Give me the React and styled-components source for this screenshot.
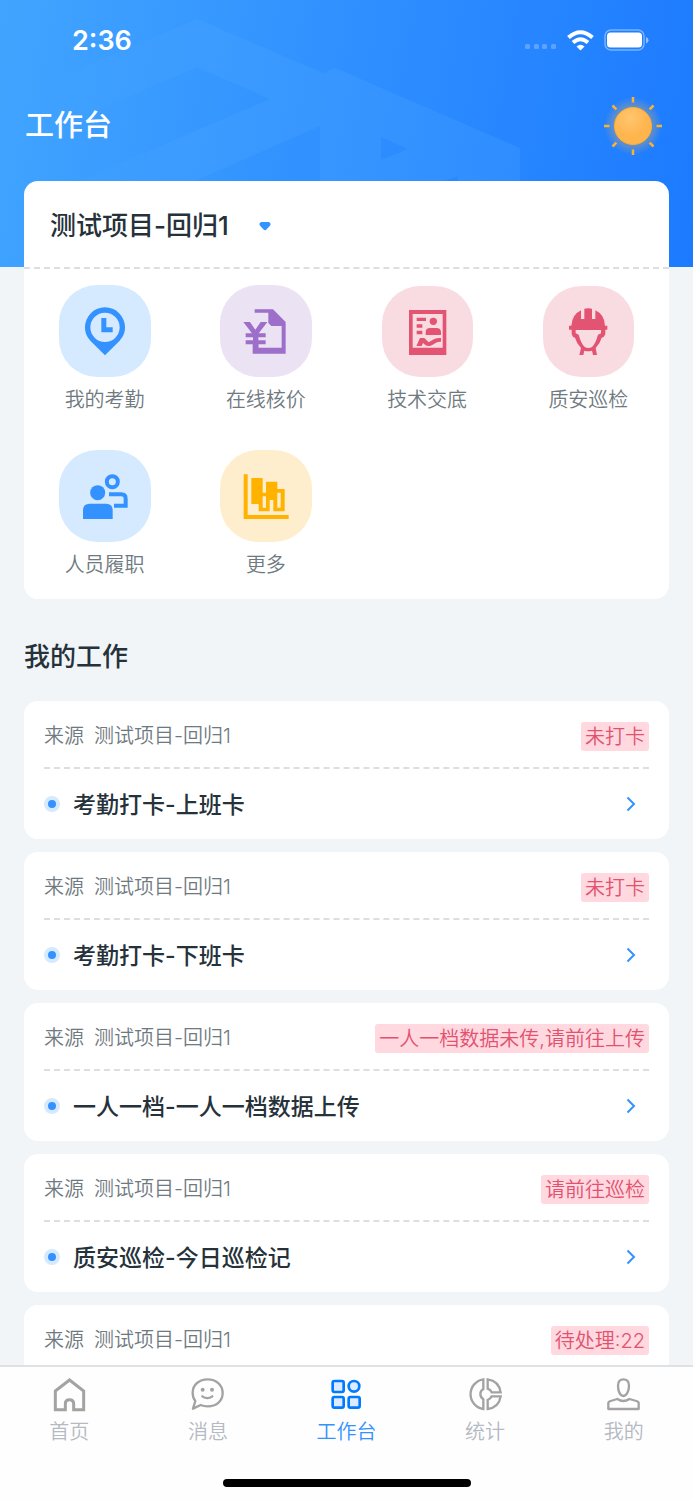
import React from 'react';
import styled, { createGlobalStyle } from 'styled-components';

const GlobalStyle = createGlobalStyle`
  *, *::before, *::after { box-sizing: border-box; }
  body {
    margin: 0;
    background: #f1f5f8;
    color: #26323a;
    font-family: Inter, "Noto Sans CJK SC", sans-serif;
  }
  h1, h2, h3, p, ul { margin: 0; padding: 0; font-weight: 500; }
  ul { list-style: none; }
  button, select { font: inherit; color: inherit; }
  svg { display: block; flex: none; }
`;

const Shell = styled.div`
  height: 100vh;
  display: flex;
  flex-direction: column;
`;

const Scroller = styled.div`
  flex: 1;
  min-height: 0;
  overflow-y: auto;
  scrollbar-width: none;
`;

const Hero = styled.header`
  position: relative;
  height: 267px;
  overflow: hidden;
  color: #fff;
  background: linear-gradient(100deg, #41a5ff 0%, #2f8fff 50%, #1c7aff 100%);
`;

const HeroPattern = styled.svg`
  position: absolute;
  top: 0;
  left: 0;
`;

const StatusBar = styled.div`
  position: relative;
  display: flex;
  align-items: center;
  justify-content: space-between;
  height: 80px;
  padding: 0 44px 0 72px;
  font-size: 27px;
  font-weight: 600;
`;

const StatusIcons = styled.div`
  display: flex;
  align-items: center;
  gap: 10px;
`;

const TitleBar = styled.div`
  position: relative;
  display: flex;
  align-items: center;
  justify-content: space-between;
  height: 92px;
  padding: 0 28px 0 25px;
`;

const PageTitle = styled.h1`
  font-size: 29px;
  line-height: 40px;
`;

const Main = styled.main`
  position: relative;
  margin-top: -86px;
  padding: 0 24px 13px;
`;

const Card = styled.section`
  background: #fff;
  border-radius: 14px;
`;

const ProjectPicker = styled.label`
  display: flex;
  align-items: center;
  height: 88px;
  padding: 4px 26px 0;
  border-bottom: 2px dashed #dcdfe1;
`;

const ProjectSelect = styled.select`
  appearance: none;
  border: 0;
  background: none;
  padding: 0 44px 0 0;
  font-size: 26px;
  font-weight: 500;
  line-height: 40px;
`;

const Caret = styled.svg`
  margin-left: -14px;
  pointer-events: none;
`;

const AppGrid = styled.div`
  display: grid;
  grid-template-columns: repeat(4, 1fr);
  row-gap: 36px;
  padding: 16px 0 20px;
`;

const AppButton = styled.button`
  display: flex;
  flex-direction: column;
  align-items: center;
  justify-content: flex-end;
  gap: 9px;
  height: 129px;
  padding: 0;
  border: 0;
  background: none;
  color: #6f7a80;
  font-size: 20px;
  font-weight: 350;
  line-height: 28px;
`;

const Tile = styled.span`
  display: block;
  overflow: hidden;
  border-radius: 38px;
  color: ${(p) => p.$ink};
  background: ${(p) => p.$tint};
`;

const SectionTitle = styled.h2`
  padding: 38px 0 24px;
  font-size: 26px;
  line-height: 40px;
`;

const TaskList = styled.ul`
  display: flex;
  flex-direction: column;
  gap: 13px;
`;

const TaskCard = styled.li`
  padding: 0 20px;
  background: #fff;
  border-radius: 14px;
`;

const TaskSource = styled.div`
  display: flex;
  align-items: center;
  justify-content: space-between;
  height: 68px;
  border-bottom: 2px dashed #dcdfe1;
  color: #6f7a80;
  font-size: 20px;
  font-weight: 350;
`;

const SourceText = styled.p`
  display: flex;
  gap: 10px;
  font-weight: 350;
`;

const Tag = styled.span`
  padding: 1px 4px 0;
  margin-top: 4px;
  border-radius: 3px;
  background: #ffd8e0;
  color: #e2526f;
  line-height: 28px;
`;

const TaskLink = styled.a`
  display: flex;
  align-items: center;
  height: 70px;
  padding-right: 13px;
  color: inherit;
  text-decoration: none;
`;

const Bullet = styled.span`
  flex: none;
  width: 16px;
  height: 16px;
  margin-right: 13px;
  border: 4px solid #d5e9ff;
  border-radius: 50%;
  background: #3392ff;
`;

const TaskTitle = styled.h3`
  flex: 1;
  padding-top: 2px;
  font-size: 23px;
  line-height: 32px;
`;

const TabBar = styled.footer`
  flex: none;
  padding-bottom: 13px;
  border-top: 2px solid #dfe2e5;
  background: #fefefe;
`;

const Tabs = styled.nav`
  display: grid;
  grid-template-columns: repeat(5, 1fr);
`;

const Tab = styled.a`
  display: flex;
  flex-direction: column;
  align-items: center;
  gap: 6px;
  padding-top: 10px;
  color: ${(p) => (p.$active ? '#3392ff' : '#b4b9c2')};
  font-size: 20px;
  font-weight: 350;
  line-height: 28px;
  text-decoration: none;
`;

const HomeIndicator = styled.div`
  width: 248px;
  height: 8px;
  margin: 33px auto 0;
  border-radius: 4px;
  background: #000;
`;

const apps = [
  {
    name: '我的考勤', tint: '#d5e9ff', ink: '#3392ff', size: 92, box: '57 30 276 276',
    art: (
      <>
        <path fillRule="evenodd" fill="currentColor" d="M195 97a60 60 0 0 1 60 60c0 18-7 30-16 40l-44 44-44-44c-9-10-16-22-16-40a60 60 0 0 1 60-60zm0 16a44 44 0 1 0 0 88 44 44 0 0 0 0-88z" />
        <path fill="currentColor" d="M184 129h15v28h19v15h-34z" />
      </>
    ),
  },
  {
    name: '在线核价', tint: '#ebe2f3', ink: '#9d6fca', size: 92, box: '541 30 276 276',
    art: (
      <>
        <path fill="currentColor" d="M645 103h55l38 38v95h-99v-36h17v18h70v-65h-31l-9-9v-31h-41z" />
        <path fill="none" stroke="currentColor" strokeWidth="12" d="M618 181h60M618 202h60" />
        <path fill="none" stroke="currentColor" strokeWidth="16" d="M648 171v50" />
        <path fill="currentColor" d="M611 141h20l16 23 16-23h20l-28 37h-16z" />
      </>
    ),
  },
  {
    name: '技术交底', tint: '#f9dce2', ink: '#e35472', size: 91, box: '66 36 273 273',
    art: (
      <>
        <path fillRule="evenodd" fill="currentColor" d="M147 108h112v135h-112zM158 120v101h90v-101z" />
        <path fill="currentColor" d="M170 131h28v10h-28zM170 151h17v10h-17zM170 170h17v11h-17z" />
        <circle cx="220" cy="142" r="11" fill="currentColor" />
        <path fill="currentColor" d="M197 183v-8q0-13 13-13h19q14 0 14 13v8zM169 216l11-24h13l13 13 17-10q8-4 20-3v11c-16-1-21 9-31 12q-9 3-17-3l-6-5-4 9z" />
      </>
    ),
  },
  {
    name: '质安巡检', tint: '#f9dce2', ink: '#e35472', size: 91, box: '504 18 273 273',
    art: (
      <>
        <path fill="currentColor" d="M618 91V117H628V86Q640 83 651 86V117H661V91Q689 104 690 137H697V149H691V163Q688 172 680 173Q675 191 662 204L666 225H654L651 212Q640 215 628 212L625 225H613L618 204Q605 191 600 173Q592 172 590 163V149H582V137H589Q591 104 618 91z" />
        <path fill="#f9dce2" d="M602 150H678V160L669 164Q662 190 651 201Q640 207 629 201Q618 190 611 164L602 160z" />
      </>
    ),
  },
  {
    name: '人员履职', tint: '#d5e9ff', ink: '#3392ff', size: 92, box: '57 30 276 276',
    art: (
      <>
        <circle cx="173" cy="158" r="22.500" fill="currentColor" />
        <path fill="currentColor" d="M129 237v-26q0-20 20-20h49q20 0 20 20v26z" />
        <circle cx="217" cy="125" r="16.500" fill="none" stroke="currentColor" strokeWidth="12" />
        <path fill="none" stroke="currentColor" strokeWidth="12" d="M207 163h36q14 0 14 13v21h-35" />
      </>
    ),
  },
  {
    name: '更多', tint: '#ffeecd', ink: '#ffb200', size: 92, box: '541 30 276 276',
    art: (
      <>
        <path fill="currentColor" d="M612 103h12v122h123v12h-135z" />
        <path fillRule="evenodd" fill="currentColor" d="M635 114h34v44h10v-33h34v22h22v67h-34v-34h-11v34h-33v-22h-22zM669 169v34h10v-34zM713 158v45h10v-45z" />
      </>
    ),
  },
];

const tasks = [
  { title: '考勤打卡-上班卡', tag: '未打卡' },
  { title: '考勤打卡-下班卡', tag: '未打卡' },
  { title: '一人一档-一人一档数据上传', tag: '一人一档数据未传,请前往上传' },
  { title: '质安巡检-今日巡检记', tag: '请前往巡检' },
  { title: '', tag: '待处理:22' },
];

const tabs = [
  {
    name: '首页', box: '157 65 105 105',
    art: <path fill="none" stroke="#a3a3a3" strokeWidth="9" d="M167 107l42.500-33 42.500 33v56h-30v-18q0-12-12.500-12t-12.500 12v18h-30z" />,
  },
  {
    name: '消息', box: '571 65 105 105',
    art: (
      <>
        <path fill="none" stroke="#a3a3a3" strokeWidth="7" strokeLinejoin="round" d="M580 160L587 137C581 130 579 122 579 112C579 88 599 72 624 72S669 88 669 113S649 153 624 153Q612 153 603 149z" />
        <circle cx="609" cy="103" r="6" fill="#a3a3a3" />
        <circle cx="637" cy="103" r="6" fill="#a3a3a3" />
        <path fill="none" stroke="#a3a3a3" strokeWidth="7" strokeLinecap="round" d="M608 123q15 11 30 0" />
      </>
    ),
  },
  {
    name: '工作台', active: true, box: '987 65 105 105',
    art: (
      <g fill="#dcebff" stroke="#007aff" strokeWidth="8">
        <rect x="998" y="77" width="33" height="33" rx="5" />
        <circle cx="1062" cy="93" r="16" />
        <rect x="998" y="125" width="33" height="32" rx="5" />
        <rect x="1046" y="125" width="33" height="32" rx="5" />
      </g>
    ),
  },
  {
    name: '统计', box: '384 65 105 105',
    art: (
      <g fill="none" stroke="#a3a3a3" strokeWidth="7">
        <path d="M430 72v29q-9 5-9 15t9 16v29a45 45 0 0 1 0-89z" />
        <path d="M443 72q34 5 39 39h-27q-3-7-12-11z" />
        <path d="M443 161q34-5 39-38h-27q-3 7-12 11z" />
      </g>
    ),
  },
  {
    name: '我的', box: '797 65 105 105',
    art: (
      <g fill="none" stroke="#a3a3a3" strokeWidth="7" strokeLinejoin="round">
        <path d="M849 72q17 0 17 19c0 14-6 31-17 31s-16-17-16-31q0-19 16-19z" />
        <path d="M804 161V143Q804 139 811 137L831 131Q849 143 867 131L888 137Q895 139 895 143V161z" />
      </g>
    ),
  },
];

function Sun() {
  const angles = [0, 45, 90, 135, 180, 225, 270, 315];
  return (
    <svg width="64" height="64" viewBox="-32 -32 64 64" role="img" aria-label="晴">
      <defs>
        <radialGradient id="sun-glow">
          <stop offset="0.6" stopColor="#ffb54d" stopOpacity="0.35" />
          <stop offset="1" stopColor="#ffb54d" stopOpacity="0" />
        </radialGradient>
        <radialGradient id="sun-disc" cx="0.42" cy="0.28" r="0.5">
          <stop offset="0" stopColor="#ffc56f" />
          <stop offset="1" stopColor="#ffb54d" />
        </radialGradient>
      </defs>
      <circle r="29" fill="url(#sun-glow)" />
      <circle r="18.500" fill="url(#sun-disc)" stroke="#fdb02f" strokeWidth="1" />
      {angles.map((a) => (
        <path key={a} d="M0 -23.500V-29" stroke="#fbb22f" strokeWidth="2.500" transform={`rotate(${a})`} />
      ))}
    </svg>
  );
}

function StatusGlyphs() {
  return (
    <StatusIcons>
      <svg width="32" height="22" viewBox="0 0 32 22" fill="#fff" fillOpacity="0.25">
        <rect x="0" y="15" width="5" height="5" rx="1.500" />
        <rect x="9" y="15" width="5" height="5" rx="1.500" />
        <rect x="17" y="15" width="5" height="5" rx="1.500" />
        <rect x="26" y="15" width="5" height="5" rx="1.500" />
      </svg>
      <svg width="27" height="21" viewBox="0 0 27 21">
        <g fill="none" stroke="#fff" strokeWidth="4">
          <path d="M1.500 7.500Q13.500-3 25.500 7.500" />
          <path d="M6 12.500Q13.500 6 21 12.500" />
        </g>
        <path fill="#fff" d="M9.500 16.500q4-3.500 8 0l-4 4z" />
      </svg>
      <svg width="45" height="22" viewBox="0 0 45 22">
        <rect x="1" y="1" width="39" height="20" rx="6" fill="none" stroke="#fff" strokeOpacity="0.4" strokeWidth="1.500" />
        <rect x="3" y="3.500" width="35" height="15" rx="3.500" fill="#fff" />
        <path d="M42 8q2.500 1 2.500 3.200T42 14.500z" fill="#fff" fillOpacity="0.5" />
      </svg>
    </StatusIcons>
  );
}

export default function App() {
  return (
    <Shell>
      <GlobalStyle />
      <Scroller>
        <Hero>
          <HeroPattern width="693" height="267" viewBox="0 0 693 267" aria-hidden="true">
            <defs>
              <linearGradient id="roof" x1="0" x2="1">
                <stop offset="0" stopColor="#49a5ff" stopOpacity="0" />
                <stop offset="0.4" stopColor="#49a5ff" stopOpacity="0.3" />
                <stop offset="1" stopColor="#49a5ff" stopOpacity="0.25" />
              </linearGradient>
            </defs>
            <path
              fill="url(#roof)"
              fillRule="evenodd"
              d="M0 103L197 19L323 73L335 68L520 148V267H320V126L190 183L0 267V215L270 99L197 67L0 152zM381 137V160L408 149zM445 181L458 176V181z"
            />
          </HeroPattern>
          <StatusBar>
            <time>2:36</time>
            <StatusGlyphs />
          </StatusBar>
          <TitleBar>
            <PageTitle>工作台</PageTitle>
            <Sun />
          </TitleBar>
        </Hero>
        <Main>
          <Card>
            <ProjectPicker>
              <ProjectSelect aria-label="项目">
                <option>测试项目-回归1</option>
              </ProjectSelect>
              <Caret width="12" height="9" viewBox="0 0 12 9">
                <path fill="#3392ff" d="M2 0h8q2 1 1.500 3L7.500 7.500q-1.500 1.500-3 0L.5 3Q0 1 2 0z" />
              </Caret>
            </ProjectPicker>
            <AppGrid>
              {apps.map((app) => (
                <AppButton key={app.name} type="button">
                  <Tile $tint={app.tint} $ink={app.ink}>
                    <svg width={app.size} height={app.size} viewBox={app.box}>{app.art}</svg>
                  </Tile>
                  {app.name}
                </AppButton>
              ))}
            </AppGrid>
          </Card>
          <SectionTitle>我的工作</SectionTitle>
          <TaskList>
            {tasks.map((task) => (
              <TaskCard key={task.title}>
                <TaskSource>
                  <SourceText>
                    <span>来源</span>
                    <span>测试项目-回归1</span>
                  </SourceText>
                  <Tag>{task.tag}</Tag>
                </TaskSource>
                <TaskLink href="#task">
                  <Bullet />
                  <TaskTitle>{task.title}</TaskTitle>
                  <svg width="10" height="16" viewBox="0 0 10 16">
                    <path d="M1.500 1.500L8 8l-6.500 6.500" fill="none" stroke="#3392ff" strokeWidth="2" />
                  </svg>
                </TaskLink>
              </TaskCard>
            ))}
          </TaskList>
        </Main>
      </Scroller>
      <TabBar>
        <Tabs>
          {tabs.map((tab) => (
            <Tab key={tab.name} href="#tab" $active={tab.active} aria-current={tab.active ? 'page' : undefined}>
              <svg width="35" height="35" viewBox={tab.box}>{tab.art}</svg>
              {tab.name}
            </Tab>
          ))}
        </Tabs>
        <HomeIndicator />
      </TabBar>
    </Shell>
  );
}
